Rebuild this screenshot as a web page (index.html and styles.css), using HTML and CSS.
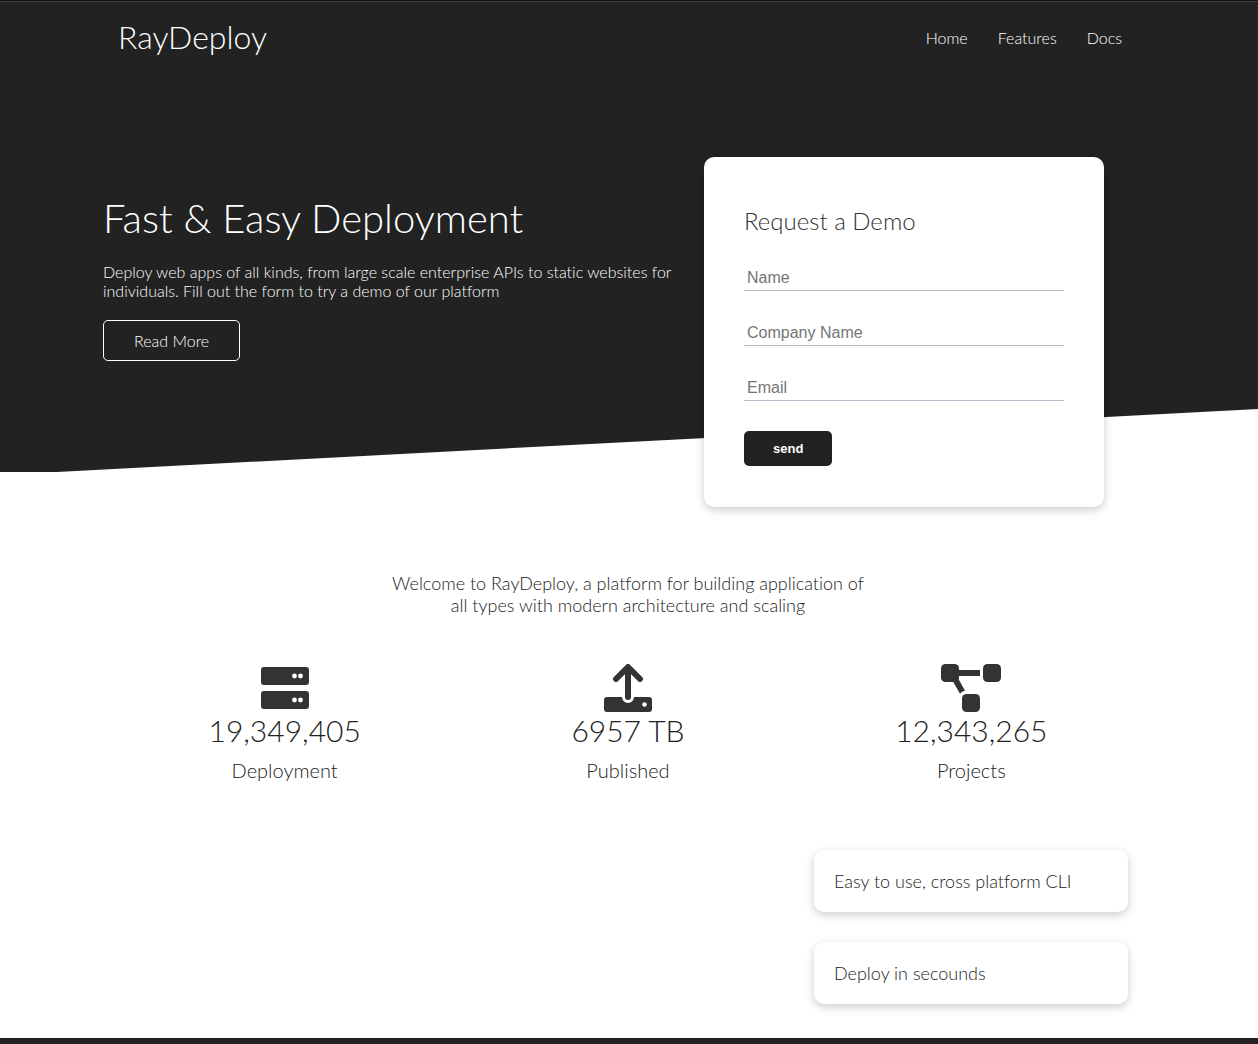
FILE: index.html
```html
<!DOCTYPE html>
<html lang="en">
<head>
<meta charset="utf-8">
<meta name="viewport" content="width=device-width, initial-scale=1">
<title>RayDeploy</title>
<link rel="stylesheet" href="styles.css">
</head>
<body>
<header class="navbar">
  <div class="container navbar-inner">
    <h1 class="logo">RayDeploy</h1>
    <nav class="nav-links">
      <a href="#home">Home</a>
      <a href="#features">Features</a>
      <a href="#docs">Docs</a>
    </nav>
  </div>
</header>

<section class="showcase" id="home">
  <div class="showcase-grid">
    <div class="showcase-text">
      <h2 class="showcase-title">Fast &amp; Easy Deployment</h2>
      <p class="showcase-lead">Deploy web apps of all kinds, from large scale enterprise APIs to static websites for individuals. Fill out the form to try a demo of our platform</p>
      <a class="btn-outline" href="#features">Read More</a>
    </div>
    <form class="card demo-form">
      <h2 class="form-title">Request a Demo</h2>
      <input class="field" type="text" name="name" placeholder="Name" aria-label="Name">
      <input class="field" type="text" name="company" placeholder="Company Name" aria-label="Company Name">
      <input class="field" type="email" name="email" placeholder="Email" aria-label="Email">
      <button class="btn-primary" type="submit">send</button>
    </form>
  </div>
</section>

<main class="container">
  <section class="stats">
    <h3 class="stats-heading">Welcome to RayDeploy, a platform for building application of all types with modern architecture and scaling</h3>
    <div class="stats-grid">
      <div class="stat">
        <svg class="icon" width="48" height="48" viewBox="0 0 48 48" aria-hidden="true">
          <rect x="0" y="3" width="48" height="18" rx="3"/>
          <rect x="0" y="27" width="48" height="18" rx="3"/>
          <g class="hole"><circle cx="33.5" cy="12" r="2.4"/><circle cx="39.5" cy="12" r="2.4"/><circle cx="33.5" cy="36" r="2.4"/><circle cx="39.5" cy="36" r="2.4"/></g>
        </svg>
        <h3 class="stat-number">19,349,405</h3>
        <p class="stat-label">Deployment</p>
      </div>
      <div class="stat">
        <svg class="icon" width="48" height="48" viewBox="0 0 48 48" aria-hidden="true">
          <path d="M3 33H18A6 6 0 0 0 30 33H45A3 3 0 0 1 48 36V45A3 3 0 0 1 45 48H3A3 3 0 0 1 0 45V36A3 3 0 0 1 3 33Z"/>
          <path class="arrow" d="M24 33V4M12 15L24 3L36 15"/>
          <circle class="hole" cx="40.5" cy="40.5" r="2.3"/>
        </svg>
        <h3 class="stat-number">6957 TB</h3>
        <p class="stat-label">Published</p>
      </div>
      <div class="stat">
        <svg class="icon" width="60" height="48" viewBox="0 0 60 48" aria-hidden="true">
          <rect x="0" y="0" width="18" height="18" rx="4.5"/>
          <rect x="42" y="0" width="18" height="18" rx="4.5"/>
          <rect x="21" y="30" width="18" height="18" rx="4.5"/>
          <path d="M17 6H39V12H17Z"/>
          <path d="M12 17.5L17.5 15L24 26.8Q20.8 27.4 19 29.8Z"/>
        </svg>
        <h3 class="stat-number">12,343,265</h3>
        <p class="stat-label">Projects</p>
      </div>
    </div>
  </section>

  <section class="cli" id="features">
    <div class="card note">Easy to use, cross platform CLI</div>
    <div class="card note">Deploy in secounds</div>
  </section>
</main>

<footer class="footer"></footer>
</body>
</html>
```

FILE: styles.css
```css
* {
  box-sizing: border-box;
  margin: 0;
  padding: 0;
}

body {
  font-family: Lato, sans-serif;
  font-size: 16px;
  font-weight: 300;
  font-variant-ligatures: none;
  line-height: 19px;
  color: #222;
  background: #fff;
  overflow-x: hidden;
}

h1, h2, h3 {
  font-weight: 300;
}

a {
  color: #fff;
  text-decoration: none;
}

.container {
  max-width: 1100px;
  margin: 0 auto;
  padding: 0 41px 0 39px;
}

.card {
  background: #fff;
  border-radius: 10px;
  box-shadow: 0 3px 10px rgba(0, 0, 0, 0.2);
}

/* Navigation */
.navbar {
  background: #222;
  border-top: 1px solid #111;
  color: #fff;
}

.navbar-inner {
  display: flex;
  align-items: center;
  justify-content: space-between;
  min-height: 70px;
}

.navbar::before {
  content: "";
  display: block;
  height: 1px;
  background: #3c3c3c;
}

.logo {
  font-size: 32px;
  line-height: 38px;
}

.nav-links {
  display: flex;
  gap: 30px;
  padding: 0 16px 0 0;
}

/* Showcase with slanted lower edge */
.showcase {
  position: relative;
  background: #222;
  color: #fff;
}

.showcase::after {
  content: "";
  position: absolute;
  left: 0;
  right: 0;
  bottom: -70px;
  height: 100px;
  background: #fff;
  transform: skewY(-3deg);
}

.showcase-grid {
  position: relative;
  z-index: 1;
  display: grid;
  grid-template-columns: 575px 400px;
  justify-content: center;
  align-items: start;
  gap: 26px;
  padding: 85px 51px 0 0;
}

.showcase-text {
  padding-top: 37px;
}

.showcase-title {
  font-size: 40px;
  line-height: 48px;
}

.showcase-lead {
  margin: 20px 0;
}

.btn-outline {
  display: inline-block;
  padding: 10px 30px;
  border: 1px solid #fff;
  border-radius: 5px;
}

.demo-form {
  padding: 49px 40px 41px;
  margin-bottom: -35px;
  color: #333;
}

.form-title {
  font-size: 24px;
  line-height: 29px;
  margin-bottom: 29px;
}

.field {
  display: block;
  width: 100%;
  height: 27px;
  margin-bottom: 28px;
  padding: 4px 3px 2px;
  border: 0;
  border-bottom: 1px solid #b4becb;
  font: 16px "Liberation Sans", Arial, sans-serif;
}

.field::placeholder {
  color: #757575;
}

.btn-primary {
  display: block;
  margin-top: 30px;
  padding: 10px 29px;
  border: 0;
  border-radius: 5px;
  background: #222;
  color: #fff;
  font: bold 13px/15px "Liberation Sans", Arial, sans-serif;
}

/* Stats */
.stats {
  padding-top: 100px;
  text-align: center;
}

.stats-heading {
  max-width: 490px;
  margin: 0 auto;
  font-size: 18px;
  line-height: 22px;
}

.stats-grid {
  display: grid;
  grid-template-columns: repeat(3, 1fr);
  gap: 10px;
  margin-top: 48px;
}

.icon {
  display: block;
  margin: 0 auto;
  fill: #333;
}

.icon .hole {
  fill: #fff;
}

.icon .arrow {
  fill: none;
  stroke: #333;
  stroke-width: 6;
  stroke-linecap: round;
  stroke-linejoin: round;
}

.stat-number {
  font-size: 30px;
  line-height: 36px;
}

.stat-label {
  margin-top: 10px;
  font-size: 20px;
  line-height: 24px;
}

/* Feature notes */
.cli {
  display: grid;
  grid-template-columns: 314px;
  justify-content: end;
  gap: 30px;
  padding: 68px 10px 34px;
}

.note {
  padding: 20px;
  font-size: 18px;
  line-height: 22px;
}

.footer {
  min-height: 6px;
  background: #222;
}
```
